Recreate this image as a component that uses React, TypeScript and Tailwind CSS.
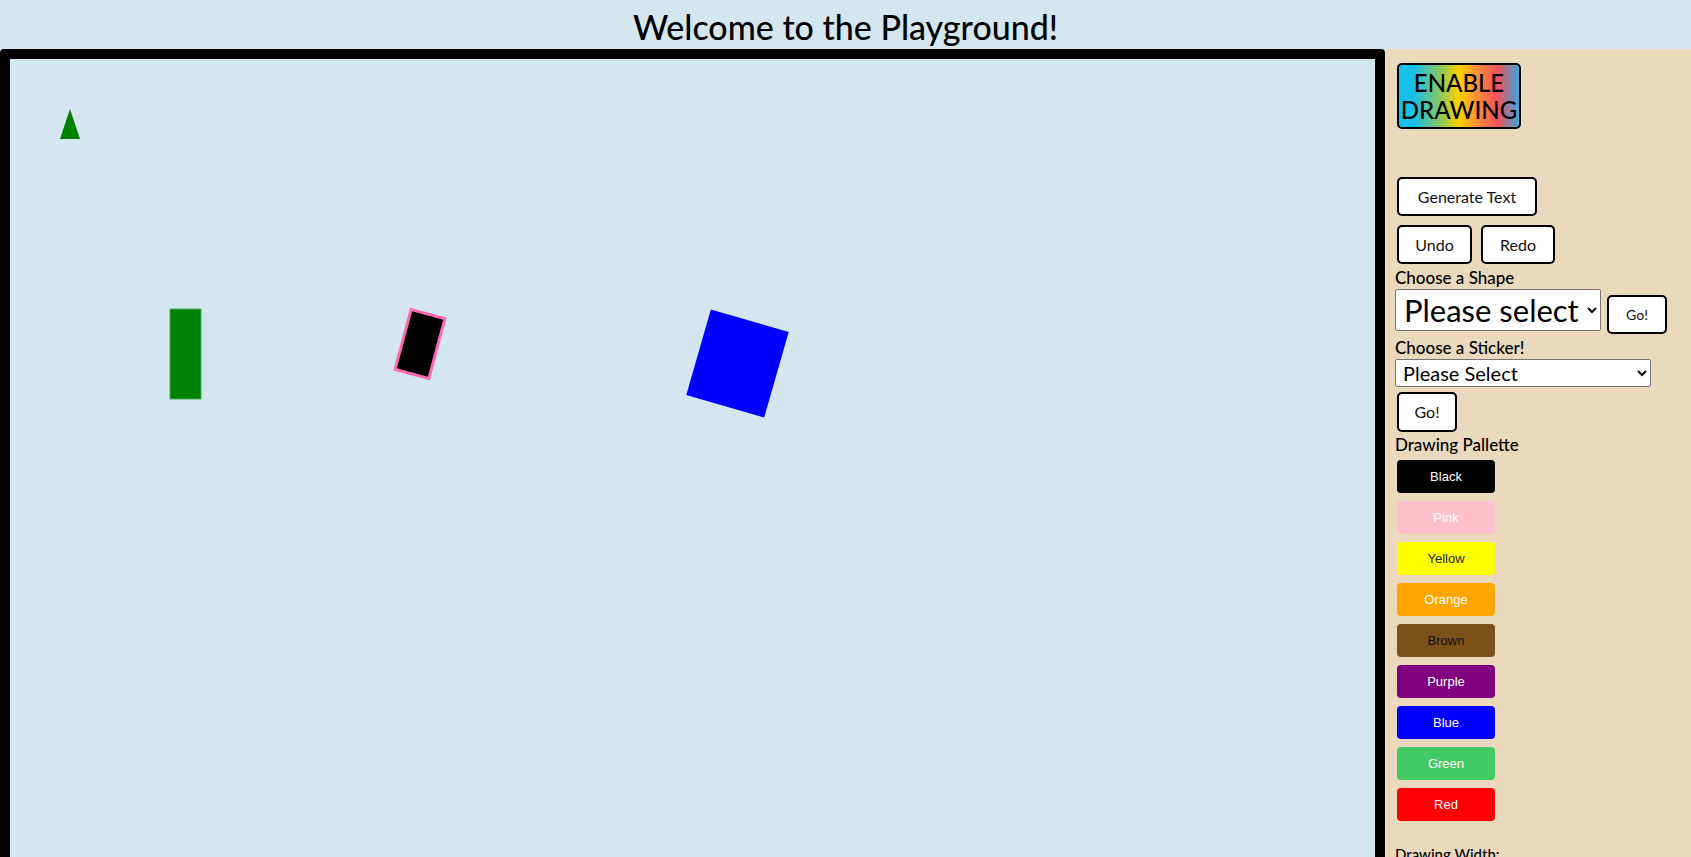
import React from "react";

const palette = [
  { name: "Black", bg: "bg-[#000000]", text: "text-white" },
  { name: "Pink", bg: "bg-[#ffc0cb]", text: "text-white" },
  { name: "Yellow", bg: "bg-[#ffff00]", text: "text-[#222]" },
  { name: "Orange", bg: "bg-[#ffa500]", text: "text-white" },
  { name: "Brown", bg: "bg-[#7b5019]", text: "text-[#111]" },
  { name: "Purple", bg: "bg-[#800080]", text: "text-white" },
  { name: "Blue", bg: "bg-[#0000ff]", text: "text-white" },
  { name: "Green", bg: "bg-[#43c866]", text: "text-white" },
  { name: "Red", bg: "bg-[#ff0000]", text: "text-white" },
];

const btn =
  "bg-white border-2 border-black rounded-[5px] text-[#111] flex items-center justify-center";

const App = () => {
  return (
    <div className="min-h-screen bg-[#d4e7f1] font-['Lato',sans-serif] overflow-hidden">
      {/* Title */}
      <h1 className="h-[49px] pt-[7px] text-center text-[34px] leading-[40px] font-medium text-black">
        Welcome to the Playground!
      </h1>

      <div className="flex items-start">
        {/* Canvas */}
        <div className="w-[1385px] h-[900px] border-[10px] border-black rounded-t-[4px] bg-[#d4e7f1]">
          <svg width="1365" height="880" className="block">
            <polygon points="60,50 70,80 50,80" fill="#008000" />
            <rect
              x="160"
              y="250"
              width="31"
              height="90"
              fill="#008000"
              stroke="#4cab5a"
              strokeWidth="1"
            />
            <rect
              x="-17.5"
              y="-31"
              width="35"
              height="62"
              fill="#000"
              stroke="#ff69b4"
              strokeWidth="3"
              transform="translate(410 285) rotate(15)"
            />
            <rect
              x="-40.5"
              y="-44.5"
              width="81"
              height="89"
              fill="#0000ff"
              transform="translate(727.5 304.5) rotate(16)"
            />
          </svg>
        </div>

        {/* Sidebar */}
        <div className="flex-1 h-[900px] bg-[#ead9bd] rounded-tl-[4px] pl-[10px] flex flex-col items-start">
          <button className="mt-[14px] ml-[2px] w-[124px] h-[66px] border-2 border-black rounded-[5px] bg-[linear-gradient(90deg,#16c0ea_12%,#8cc85a_35%,#ffd200_50%,#ff8a3c_66%,#f2525a_82%,#3fa6e0_100%)] text-[24px] leading-[27px] font-medium text-black">
            ENABLE
            <br />
            DRAWING
          </button>

          <button className={`${btn} mt-[48px] ml-[2px] w-[140px] h-[39px] text-[16px]`}>
            Generate Text
          </button>

          <div className="mt-[9px] ml-[2px] flex gap-[9px]">
            <button className={`${btn} w-[75px] h-[39px] text-[16px]`}>Undo</button>
            <button className={`${btn} w-[74px] h-[39px] text-[16px]`}>Redo</button>
          </div>

          <label className="mt-[4px] text-[17px] leading-[20px] font-medium text-black">
            Choose a Shape
          </label>
          <div className="mt-[1px] flex items-start">
            <select className="w-[206px] h-[42px] bg-white border border-[#767676] rounded-[2px] text-[31px] leading-[36px] pl-[4px] text-black">
              <option>Please select</option>
              <option>Rectangle</option>
              <option>Square</option>
              <option>Triangle</option>
            </select>
            <button className={`${btn} mt-[6px] ml-[6px] w-[60px] h-[39px] text-[14px]`}>
              Go!
            </button>
          </div>

          <label className="mt-[4px] text-[17px] leading-[20px] font-medium text-black">
            Choose a Sticker!
          </label>
          <select className="mt-[1px] w-[256px] h-[28px] bg-white border border-[#767676] rounded-[2px] text-[20px] leading-[24px] pl-[3px] text-black">
            <option>Please Select</option>
            <option>Star</option>
            <option>Heart</option>
          </select>
          <button className={`${btn} mt-[5px] ml-[2px] w-[60px] h-[40px] text-[16px]`}>
            Go!
          </button>

          <label className="mt-[3px] text-[17px] leading-[20px] font-medium text-black">
            Drawing Pallette
          </label>
          <div className="mt-[5px] ml-[2px] flex flex-col gap-[8px]">
            {palette.map((c) => (
              <button
                key={c.name}
                className={`${c.bg} ${c.text} w-[98px] h-[33px] rounded-[4px] font-['Liberation_Sans',Arial,sans-serif] text-[13px]`}
              >
                {c.name}
              </button>
            ))}
          </div>

          <label className="mt-[23px] text-[15px] leading-[20px] font-medium text-black">
            Drawing Width:
          </label>
          <input type="range" min={1} max={50} defaultValue={5} className="mt-[4px] w-[130px]" />
        </div>
      </div>
    </div>
  );
};

export default App;
